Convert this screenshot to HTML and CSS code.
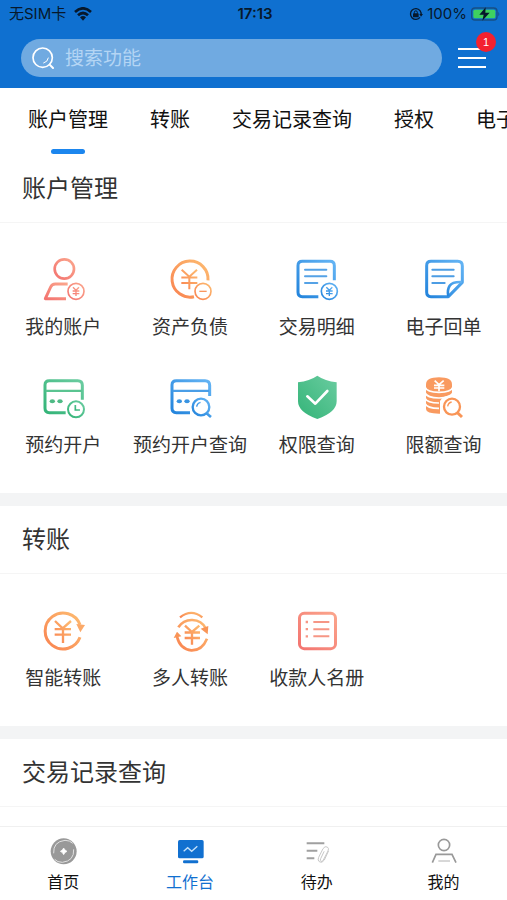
FILE: index.html
```html
<!DOCTYPE html>
<html lang="zh-CN">
<head>
<meta charset="utf-8">
<meta name="viewport" content="width=device-width, initial-scale=1">
<title>工作台</title>
<link rel="stylesheet" href="styles.css">
</head>
<body>
<svg class="defs" width="0" height="0" aria-hidden="true">
  <defs>
    <linearGradient id="red" x1="0" y1="1" x2="1" y2="0"><stop offset="0" stop-color="#f37470"/><stop offset="1" stop-color="#fba58c"/></linearGradient>
    <linearGradient id="orange" x1="0" y1="1" x2="1" y2="0"><stop offset="0" stop-color="#f98350"/><stop offset="1" stop-color="#fdbb70"/></linearGradient>
    <linearGradient id="blue" x1="0" y1="1" x2="1" y2="0"><stop offset="0" stop-color="#2384dc"/><stop offset="1" stop-color="#64b4f4"/></linearGradient>
    <linearGradient id="green" x1="0" y1="1" x2="1" y2="0"><stop offset="0" stop-color="#34b478"/><stop offset="1" stop-color="#6acca0"/></linearGradient>
  </defs>
</svg>
<div class="app">
  <header class="top">
    <div class="status">
      <div class="carrier"><span>无SIM卡</span>
        <svg class="wifi" viewBox="0 0 54 42"><g fill="none" stroke="#07182b" stroke-width="8"><path d="M3 15Q27-7 51 15"/><path d="M12 25Q27 11 42 25"/></g><path d="M27 41l-9-10q9-8 18 0z" fill="#07182b"/></svg>
      </div>
      <time class="clock">17:13</time>
      <div class="power">
        <svg class="lock" viewBox="0 0 42 42"><path d="M33 11A16 16 0 1 0 33 31M33 11A16 16 0 0 1 36 24" fill="none" stroke="#07182b" stroke-width="4"/><path d="M31 21h11l-6 8z" fill="#07182b"/><rect x="12" y="19" width="17" height="12" rx="2" fill="#07182b"/><path d="M16 20v-4a4.500 4.500 0 0 1 9 0v4" fill="none" stroke="#07182b" stroke-width="3"/></svg>
        <span>100%</span>
        <svg class="battery" viewBox="0 0 90 42"><rect x="2" y="3" width="76" height="36" rx="10" fill="none" stroke="#174f83" stroke-width="4"/><rect x="7" y="8" width="66" height="26" rx="5" fill="#3ed160"/><path d="M82 14q6 7 0 14z" fill="#174f83"/><path d="M44 1L25 23h13l-4 18 22-24H43z" fill="#07182b"/></svg>
      </div>
    </div>
    <div class="bar">
      <label class="search">
        <svg viewBox="0 0 66 66" fill="none" stroke="#fff" stroke-linecap="round"><circle cx="32" cy="32" r="29" stroke-width="5"/><path d="M53 53l10 10" stroke-width="6"/><path d="M49 33q-2 12-14 15" stroke-width="3"/></svg>
        <input type="search" placeholder="搜索功能" aria-label="搜索功能">
      </label>
      <button class="menu" type="button" aria-label="菜单">
        <svg viewBox="0 0 28 22"><path d="M0 2h28M0 11h28M0 20h28" stroke="#fff" stroke-width="2"/></svg>
        <span class="badge">1</span>
      </button>
    </div>
  </header>

  <nav class="tabs">
    <a class="active" href="#account">账户管理</a>
    <a href="#transfer">转账</a>
    <a href="#records">交易记录查询</a>
    <a href="#auth">授权</a>
    <a href="#more">电子</a>
  </nav>

  <main class="content">
    <section id="account">
      <h2>账户管理</h2>
      <div class="grid">
        <a class="item" href="#"><svg viewBox="124 48 132 132" fill="none" stroke="url(#red)"><circle cx="194" cy="84" r="29" stroke-width="8"/><path d="M204 129h-37q-10 0-14 9l-16 35h62" stroke-width="9" stroke-linejoin="round"/><circle cx="229" cy="151" r="24" stroke-width="5"/><path d="M220 139l9 9 9-9M229 148v17M219 150h20M219 158h20" stroke-width="4"/></svg><span>我的账户</span></a>
        <a class="item" href="#"><svg viewBox="504 48 132 132" fill="none" stroke="url(#orange)"><path d="M624 118A54 54 0 1 0 582 167" stroke-width="9"/><path d="M545 86l23 21 23-21M568 107v38M544 109.500h48M544 126h48" stroke-width="6"/><circle cx="609" cy="151" r="24" stroke-width="5"/><path d="M598 149h22v4h-22z" stroke="none" fill="#f9975f"/></svg><span>资产负债</span></a>
        <a class="item" href="#"><svg viewBox="123 48 132 132" fill="none" stroke="url(#blue)"><path d="M241 118V74q0-13-13-13h-83q-13 0-13 13v80q0 13 13 13h48" stroke-width="9"/><g stroke="#55a2e6" stroke-width="6" stroke-linecap="round"><path d="M153 86h64M153 106h64M153 126h37"/></g><circle cx="226" cy="151" r="24" stroke-width="5"/><path d="M217 139l9 9 9-9M226 148v17M216 150h20M216 158h20" stroke-width="4"/></svg><span>交易明细</span></a>
        <a class="item" href="#"><svg viewBox="503 48 132 132" fill="none" stroke="url(#blue)" stroke-linejoin="round"><path d="M624 124V75q0-14-14-14h-80q-13 0-13 13v80q0 13 13 13h52z" stroke-width="9"/><path d="M582 166q-4-20 4-32t36-11" stroke-width="8"/><g stroke="#4c9de4" stroke-width="6" stroke-linecap="round"><path d="M534 86h64M534 106h64M534 126h37"/></g></svg><span>电子回单</span></a>
        <a class="item" href="#"><svg viewBox="124 42 132 132" fill="none" stroke="url(#green)"><path d="M248 116V73q0-14-14-14h-85q-13 0-13 13v70q0 13 13 13h49" stroke-width="9"/><path d="M138 86h108v7H138z" stroke="none" fill="#5ac491"/><ellipse cx="158" cy="121" rx="8" ry="6" stroke="none" fill="#4fba85"/><ellipse cx="181" cy="121" rx="8" ry="6" stroke="none" fill="#4fba85"/><circle cx="229" cy="145" r="24" stroke-width="6"/><path d="M227 132v15h14" stroke-width="5"/></svg><span>预约开户</span></a>
        <a class="item" href="#"><svg viewBox="504 42 132 132" fill="none" stroke="url(#blue)"><path d="M629 105V73q0-14-14-14h-86q-13 0-13 13v70q0 13 13 13h41" stroke-width="9"/><path d="M518 86h109v7H518z" stroke="none" fill="#4a9ee7"/><ellipse cx="538" cy="121" rx="8" ry="6" stroke="none" fill="#3994e2"/><ellipse cx="561" cy="121" rx="8" ry="6" stroke="none" fill="#3994e2"/><circle cx="603" cy="138" r="25" stroke-width="7"/><path d="M619 156l14 12" stroke-width="8"/><path d="M590 137q2-11 12-13" stroke-width="4"/></svg><span>预约开户查询</span></a>
        <a class="item" href="#"><svg viewBox="123 42 132 132"><path d="M190 44q23 16 58 20v57q0 33-58 53-58-20-58-53V64q35-4 58-20z" fill="url(#green)"/><path d="M160 106l24 22 36-38" fill="none" stroke="#fff" stroke-width="8" stroke-linecap="round" stroke-linejoin="round"/></svg><span>权限查询</span></a>
        <a class="item" href="#"><svg viewBox="503 42 132 132" fill="none"><path d="M515 71q0-22 39-22t39 22v66q0 21-39 21t-39-14z" fill="#f99a60"/><path d="M512 78q6 16 42 16t42-16M512 95q6 16 42 16t42-16M512 111q6 15 42 15M512 127q6 15 42 15" stroke="#fff" stroke-width="5"/><path d="M541 59l13 12 14-12M554 69v22M539 73h31M539 81h31" stroke="#fff" stroke-width="5"/><path d="M557 120q8-17 38-17l12 0v60h-50z" fill="#fff"/><circle cx="593" cy="137" r="24" stroke="#f99557" stroke-width="7"/><path d="M609 155l14 13" stroke="#f99557" stroke-width="9"/><path d="M580 136q2-11 12-13" stroke="#f99557" stroke-width="4"/></svg><span>限额查询</span></a>
      </div>
    </section>

    <section id="transfer">
      <h2>转账</h2>
      <div class="grid">
        <a class="item" href="#"><svg viewBox="124 48 132 132" fill="none" stroke="url(#orange)"><path d="M241 98A54 54 0 1 0 241 136" stroke-width="9"/><path d="M230 96l26 3-14 22z" stroke="none" fill="#fba969"/><path d="M166 87l23 22 25-22M190 108v45M165 111.500h49M165 128h49" stroke-width="7"/></svg><span>智能转账</span></a>
        <a class="item" href="#"><svg viewBox="504 48 132 132" fill="none" stroke="url(#orange)"><path d="M540 76q34-27 67 0" stroke-width="7"/><path d="M535 106q15-23 42-22 28 1 40 25M621 140q-15 36-47 35-34-3-43-41" stroke-width="8"/><path d="M602 110l23-8-2 25zM521 138l10-19 13 14z" stroke="none" fill="#f99557"/><path d="M555 101l21 19 22-19M576 120v38M554 121.500h46M554 138h46" stroke-width="7"/></svg><span>多人转账</span></a>
        <a class="item" href="#"><svg viewBox="123 48 132 132" fill="none"><rect x="136.500" y="64" width="108" height="106" rx="14" stroke="url(#red)" stroke-width="9"/><path d="M178 90h48M178 111.500h48M178 133h48" stroke="#f69685" stroke-width="6"/><path d="M155 90h7M155 111.500h7M155 133h7" stroke="#f69685" stroke-width="7"/></svg><span>收款人名册</span></a>
      </div>
    </section>

    <section id="records">
      <h2>交易记录查询</h2>
    </section>
  </main>

  <nav class="dock">
    <a href="#"><svg viewBox="145 108 90 90"><circle cx="192" cy="154" r="39" fill="#999"/><g fill="none" stroke="#e2e2e2" stroke-width="3"><path d="M162 160q-2-35 34-39 15 0 23 9"/><path d="M222 148q2 35-34 39-15 0-23-9"/></g><path d="M192 144q3 7 10 10-7 3-10 10-3-7-10-10 7-3 10-10z" fill="#fff" stroke="#fff" stroke-width="2"/></svg><span>首页</span></a>
    <a class="current" href="#"><svg viewBox="525 108 90 90"><rect x="534" y="120" width="77" height="55" rx="5" fill="#1170d0"/><rect x="549" y="181" width="46" height="9" rx="4" fill="#1170d0"/><path d="M551 154l12-11 12 11 17-15" fill="none" stroke="#c5e2fb" stroke-width="4"/></svg><span>工作台</span></a>
    <a href="#"><svg viewBox="144 108 90 90" fill="none"><path d="M158 130h53M158 152h32M158 175h23" stroke="#a0a0a0" stroke-width="6"/><g stroke="#c8c8c8" stroke-width="3" stroke-linecap="round"><path d="M223 154l-12 26q-7 10-14 6-8-5-3-14l13-26q6-9 13-5 6 4 2 12l-14 27q-4 6-7 4-4-2-1-8l10-21"/></g></svg><span>待办</span></a>
    <a href="#"><svg viewBox="524 108 90 90" fill="none" stroke="#999" stroke-width="5"><circle cx="569" cy="135" r="17"/><path d="M534 188l11-25h48l12 25"/><path d="M552 183h35" stroke="#c4c4c4" stroke-width="4"/></svg><span>我的</span></a>
  </nav>
</div>
</body>
</html>
```
FILE: styles.css
```css
* {
  box-sizing: border-box;
}

body {
  margin: 0;
  background: #fff;
  color: #333;
  font-family: Inter, "Noto Sans CJK SC", sans-serif;
}

a {
  color: inherit;
  text-decoration: none;
}

svg {
  display: block;
  flex: none;
}

.defs {
  position: absolute;
}

.app {
  display: flex;
  flex-direction: column;
  height: 100vh;
}

.top {
  flex: none;
  padding-bottom: 11px;
  background: #0f70d0;
}

.status {
  display: grid;
  grid-template-columns: 1fr auto 1fr;
  align-items: center;
  height: 28px;
  padding: 0 6px 0 9px;
  color: #07182b;
  font-size: 15px;
  line-height: 20px;
}

.carrier,
.power {
  display: flex;
  align-items: center;
  gap: 8px;
}

.power {
  justify-content: flex-end;
  gap: 4px;
}

.clock {
  font-weight: 600;
}

.wifi {
  width: 18px;
  height: 14px;
}

.lock {
  width: 14px;
  height: 14px;
}

.battery {
  width: 30px;
  height: 14px;
}

.bar {
  display: flex;
  align-items: center;
  gap: 16px;
  padding: 11px 21px 0;
}

.search {
  display: flex;
  flex: 1;
  align-items: center;
  gap: 11px;
  height: 38px;
  padding: 0 11px;
  border-radius: 19px;
  background: #70aae1;
}

.search svg {
  width: 22px;
  height: 22px;
}

.search input {
  flex: 1;
  min-width: 0;
  padding: 0;
  border: 0;
  outline: 0;
  background: none;
  color: #fff;
  font: inherit;
  font-size: 19px;
}

.search input::placeholder {
  color: #b4d5f4;
}

.menu {
  position: relative;
  padding: 0;
  border: 0;
  background: none;
}

.menu svg {
  width: 28px;
  height: 22px;
}

.badge {
  position: absolute;
  top: -15px;
  right: -10px;
  width: 20px;
  height: 20px;
  border-radius: 50%;
  background: #f3212f;
  color: #fff;
  font-size: 11px;
  line-height: 20px;
}

.tabs {
  display: flex;
  flex: none;
  gap: 42px;
  height: 67px;
  padding: 17px 0 0 28px;
  overflow: hidden;
  color: #111;
  font-size: 20px;
  line-height: 30px;
  white-space: nowrap;
}

.tabs a {
  flex: none;
}

.tabs .active::after {
  display: block;
  width: 34px;
  height: 5px;
  margin: 14px auto 0;
  border-radius: 3px;
  background: #1c86ee;
  content: "";
}

.content {
  flex: 1;
  min-height: 0;
  overflow: hidden;
}

section + section {
  border-top: 13px solid #f3f4f5;
}

h2 {
  margin: 0;
  padding: 16px 22px 15px;
  border-bottom: 1px solid #f5f5f5;
  font-size: 24px;
  font-weight: 400;
  line-height: 36px;
}

.grid {
  display: grid;
  grid-template-columns: repeat(4, 1fr);
  row-gap: 33px;
  padding: 34px 0 33px;
}

.item {
  display: flex;
  flex-direction: column;
  align-items: center;
  gap: 13px;
  font-size: 19px;
  line-height: 28px;
  white-space: nowrap;
}

.item svg {
  width: 44px;
  height: 44px;
}

.dock {
  display: grid;
  flex: none;
  grid-template-columns: repeat(4, 1fr);
  padding: 9px 0 6px;
  border-top: 1px solid #f0f0f0;
  background: #fff;
  color: #111;
  font-size: 16px;
  line-height: 24px;
}

.dock a {
  display: flex;
  flex-direction: column;
  align-items: center;
  gap: 4px;
}

.dock svg {
  width: 30px;
  height: 30px;
}

.dock .current {
  color: #1170d0;
}
```
